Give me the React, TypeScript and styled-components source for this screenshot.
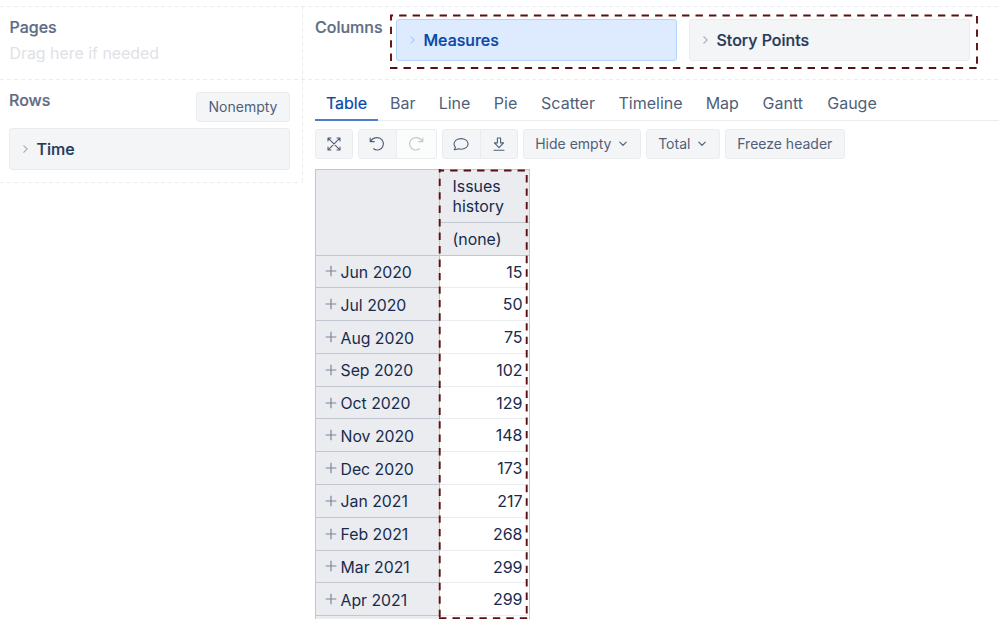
import React from "react";
import styled, { createGlobalStyle, css } from "styled-components";

const GlobalStyle = createGlobalStyle`
  *, *::before, *::after { box-sizing: border-box; }
  body { margin: 0; background: #fff; font-family: Inter, "Liberation Sans", sans-serif; }
`;

const dashX = css`
  background-image: repeating-linear-gradient(90deg, #ebecf0 0 4px, transparent 4px 7px);
`;
const dashY = css`
  background-image: repeating-linear-gradient(180deg, #ebecf0 0 4px, transparent 4px 7px);
`;

const Page = styled.div`
  width: 999px;
  height: 619px;
  padding-top: 6px;
  overflow: hidden;
  color: #172b4d;
  font-size: 16px;
`;
const RuleX = styled.div`
  height: 1px;
  ${dashX}
`;
const RuleY = styled.div`
  width: 1px;
  ${dashY}
`;
const TopArea = styled.div`
  display: grid;
  grid-template-columns: 302px 1px 1fr;
  height: 72px;
`;
const MainArea = styled.div`
  display: grid;
  grid-template-columns: 302px 1px 1fr;
  align-items: start;
  & > ${RuleY} { height: 103px; }
`;
const PagesPanel = styled.section`
  padding: 9px 9.5px;
`;
const PanelTitle = styled.h2`
  margin: 0;
  font-size: 16px;
  line-height: 22px;
  font-weight: 500;
  color: #5e6c84;
  -webkit-text-stroke: 0.2px currentColor;
`;
const Placeholder = styled.p`
  margin: 5px 0 0;
  font-size: 15.9px;
  line-height: 22px;
  color: #dfe1e6;
`;
const ColumnsPanel = styled.section`
  display: flex;
  padding-left: 12px;
`;
const ColumnsTitle = styled(PanelTitle)`
  width: 75px;
  padding-top: 9px;
`;
const ChipGroup = styled.div`
  position: relative;
  width: 588px;
  height: 63px;
  padding: 12px 0 0 6px;
  display: flex;
  gap: 12px;
`;
const Chip = styled.div<{ $active?: boolean }>`
  display: flex;
  align-items: center;
  gap: 7.5px;
  width: 281px;
  height: 42px;
  padding: 0 0 0 12px;
  border: 1px solid ${(p) => (p.$active ? "#b3d4ff" : "#ebecf0")};
  border-radius: 3px;
  background: ${(p) => (p.$active ? "#deebff" : "#f4f5f7")};
  color: ${(p) => (p.$active ? "#0747a6" : "#253858")};
  font-size: 16px;
  font-weight: 500;
  line-height: 22px;
  -webkit-text-stroke: 0.2px currentColor;
  svg { color: ${(p) => (p.$active ? "#a6cbfb" : "#a5adba")}; }
`;
const RowsPanel = styled.section`
  height: 102px;
  padding: 9px 12px 0 9px;
`;
const RowsHeader = styled.div`
  display: flex;
  justify-content: space-between;
  height: 39px;
  & > button { margin-top: 3px; }
`;
const Button = styled.button<{ $width: number; $faded?: boolean }>`
  display: flex;
  align-items: center;
  justify-content: center;
  gap: 7px;
  width: ${(p) => p.$width}px;
  height: 30px;
  padding: 0 0 1px;
  border: 1px solid #ebecf0;
  border-radius: 3px;
  background: ${(p) => (p.$faded ? "#fbfcfc" : "#f4f5f7")};
  color: ${(p) => (p.$faded ? "#c1c7d0" : "#505f79")};
  font: 400 14px/20px Inter, "Liberation Sans", sans-serif;
`;
const ButtonGroup = styled.div`
  display: flex;
  & > :first-child { border-radius: 3px 0 0 3px; }
  & > :last-child { border-left: 0; border-radius: 0 3px 3px 0; }
`;
const Report = styled.section``;
const Tabs = styled.nav`
  display: flex;
  height: 41px;
  margin-left: 12px;
  border-bottom: 1px solid #ebecf0;
`;
const Tab = styled.div<{ $width: number; $active?: boolean }>`
  width: ${(p) => p.$width}px;
  height: 41px;
  padding-top: 12px;
  line-height: 22px;
  text-align: center;
  color: ${(p) => (p.$active ? "#0747a6" : "#505f79")};
  border-bottom: ${(p) => (p.$active ? "2px solid #4c7fcb" : "0")};
  -webkit-text-stroke: ${(p) => (p.$active ? "0.2px currentColor" : "0")};
`;
const Toolbar = styled.div`
  display: flex;
  gap: 5px;
  padding: 8px 0 0 12px;
`;
const TableWrap = styled.div`
  position: relative;
  margin: 10px 0 0 12px;
  width: 215px;
`;
const Head = styled.div`
  display: grid;
  grid-template-columns: 124px 90px;
  grid-template-rows: 53px 33px;
  border-top: 1px solid #c1c7d0;
  border-left: 1px solid #c1c7d0;
  height: 87px;
  width: 215px;
  background: #ebecf0;
`;
const Corner = styled.div`
  grid-row: 1 / 3;
  border-right: 1px solid #c1c7d0;
  border-bottom: 1px solid #c1c7d0;
`;
const HeadCell = styled.div`
  padding: 7px 24px 0 12.5px;
  font-size: 15.9px;
  line-height: 20px;
  border-right: 1px solid #c1c7d0;
  border-bottom: 1px solid #c1c7d0;
`;
const Row = styled.div`
  display: grid;
  grid-template-columns: 125px 90px;
  height: 32.77px;
  font-size: 15.8px;
`;
const RowHead = styled.div`
  display: flex;
  align-items: center;
  gap: 3.5px;
  padding: 2px 0 0 9px;
  border: solid #c1c7d0;
  border-width: 0 1px 1px 1px;
  background: #ebecf0;
  svg { color: #7a869a; margin-bottom: 2px; }
`;
const Value = styled.div`
  padding: 6px 6.5px 0 0;
  font-size: 16px;
  line-height: 20px;
  text-align: right;
  border-right: 1px solid #c1c7d0;
  border-bottom: 1px solid #ebecf0;
`;
const Body = styled.div`
  margin-top: -0.4px;
`;
const Outline = styled.svg<{ $left: number }>`
  position: absolute;
  top: 0;
  left: ${(p) => p.$left}px;
  overflow: visible;
  pointer-events: none;
  fill: none;
  stroke: #5c0f12;
  stroke-width: 1.9;
  stroke-dasharray: 7.4 6.07;
`;

const ChevronRight = () => (
  <svg width="7" height="10" viewBox="0 0 7 10" fill="none" stroke="currentColor" strokeWidth="1.1">
    <path d="M1.5 1.3 5.2 5 1.5 8.7" />
  </svg>
);
const ChevronDown = () => (
  <svg width="10" height="8" viewBox="0 0 10 8" fill="none" stroke="currentColor" strokeWidth="1.2" strokeLinecap="round" strokeLinejoin="round">
    <path d="M1.8 2.2 5 5.4 8.2 2.2" />
  </svg>
);
const Plus = () => (
  <svg width="12" height="12" viewBox="0 0 12 12" stroke="currentColor" strokeWidth="1.2">
    <path d="M6 .7v10.6M.7 6h10.6" />
  </svg>
);
const Glyph = styled.svg`
  width: 16px;
  height: 16px;
  flex: none;
  fill: none;
  stroke: currentColor;
  stroke-width: 1.1;
  stroke-linecap: round;
  stroke-linejoin: round;
`;
const Expand = () => (
  <Glyph viewBox="0 0 16 16">
    <path d="M2.2 2.2l11.6 11.6M13.8 2.2l-11.6 11.6M2 5V2h3M11 2h3v3M14 11v3h-3M5 14H2v-3" />
  </Glyph>
);
const Undo = () => (
  <Glyph viewBox="0 0 16 16">
    <path d="M1.2 2v3.6h4.1M1.5 5.4C2.9 3 5.4 1.6 8.2 1.6a6.2 6.2 0 1 1-3.7 11.2" />
  </Glyph>
);
const Redo = () => (
  <Glyph viewBox="0 0 16 16">
    <path d="M14.8 2v3.6h-4.1M14.5 5.4C13.1 3 10.6 1.6 7.8 1.6a6.2 6.2 0 1 0 3.7 11.2" />
  </Glyph>
);
const Comment = () => (
  <Glyph viewBox="0 0 16 16">
    <path d="M1.2 13.7c.8-.8 1.1-1.5 1.2-2.6A4.8 4.8 0 0 1 1 7.9C1 4.9 4.1 2.6 8.1 2.6s7 2.3 7 5.3-3 5.3-7 5.3c-1 0-1.9-.1-2.8-.4-1.2.6-2.6.9-4.1.9z" />
  </Glyph>
);
const Download = () => (
  <Glyph viewBox="0 0 16 16">
    <path d="M6.4 2h3.2v4.9h3L8 11.6 3.4 6.9h3zM3 14.3h10" />
  </Glyph>
);

const tabs: [string, number][] = [
  ["Table", 63], ["Bar", 49.5], ["Line", 54], ["Pie", 48], ["Scatter", 77],
  ["Timeline", 88], ["Map", 55.5], ["Gantt", 65.5], ["Gauge", 73],
];
const data: [string, number][] = [
  ["Jun 2020", 15], ["Jul 2020", 50], ["Aug 2020", 75], ["Sep 2020", 102],
  ["Oct 2020", 129], ["Nov 2020", 148], ["Dec 2020", 173], ["Jan 2021", 217],
  ["Feb 2021", 268], ["Mar 2021", 299], ["Apr 2021", 299],
];

export default function App() {
  return (
    <>
      <GlobalStyle />
      <Page>
        <RuleX />
        <TopArea>
          <PagesPanel>
            <PanelTitle>Pages</PanelTitle>
            <Placeholder>Drag here if needed</Placeholder>
          </PagesPanel>
          <RuleY />
          <ColumnsPanel>
            <ColumnsTitle>Columns</ColumnsTitle>
            <ChipGroup>
              <Chip $active><ChevronRight />Measures</Chip>
              <Chip><ChevronRight />Story Points</Chip>
              <Outline $left={0} width="588" height="63">
                <path d="M0 8.5H588" strokeDashoffset="4.3" />
                <path d="M587 9V62" />
                <path d="M0 61H588" />
                <path d="M1 8V62" strokeDashoffset="1.8" />
              </Outline>
            </ChipGroup>
          </ColumnsPanel>
        </TopArea>
        <RuleX />
        <MainArea>
          <div>
            <RowsPanel>
              <RowsHeader>
                <PanelTitle>Rows</PanelTitle>
                <Button $width={94}>Nonempty</Button>
              </RowsHeader>
              <Chip><ChevronRight />Time</Chip>
            </RowsPanel>
            <RuleX />
          </div>
          <RuleY />
          <Report>
            <Tabs>
              {tabs.map(([name, width], i) => (
                <Tab key={name} $width={width} $active={i === 0}>{name}</Tab>
              ))}
            </Tabs>
            <Toolbar>
              <Button $width={37.6}><Expand /></Button>
              <ButtonGroup>
                <Button $width={39.2}><Undo /></Button>
                <Button $width={40} $faded><Redo /></Button>
              </ButtonGroup>
              <ButtonGroup>
                <Button $width={39}><Comment /></Button>
                <Button $width={37}><Download /></Button>
              </ButtonGroup>
              <Button $width={118}>Hide empty<ChevronDown /></Button>
              <Button $width={74}>Total<ChevronDown /></Button>
              <Button $width={120}>Freeze header</Button>
            </Toolbar>
            <TableWrap>
              <Head>
                <Corner />
                <HeadCell>Issues history</HeadCell>
                <HeadCell>(none)</HeadCell>
              </Head>
              <Body>
                {data.map(([label, value]) => (
                  <Row key={label}>
                    <RowHead><Plus />{label}</RowHead>
                    <Value>{value}</Value>
                  </Row>
                ))}
                <Row><RowHead /><Value /></Row>
              </Body>
              <Outline $left={124} width="89" height="450">
                <path d="M0 1.5H89" strokeDashoffset="2.3" />
                <path d="M87.7 6V450" />
                <path d="M0 449.3H89" />
                <path d="M.7 0V450" strokeDashoffset="3.8" />
              </Outline>
            </TableWrap>
          </Report>
        </MainArea>
      </Page>
    </>
  );
}
